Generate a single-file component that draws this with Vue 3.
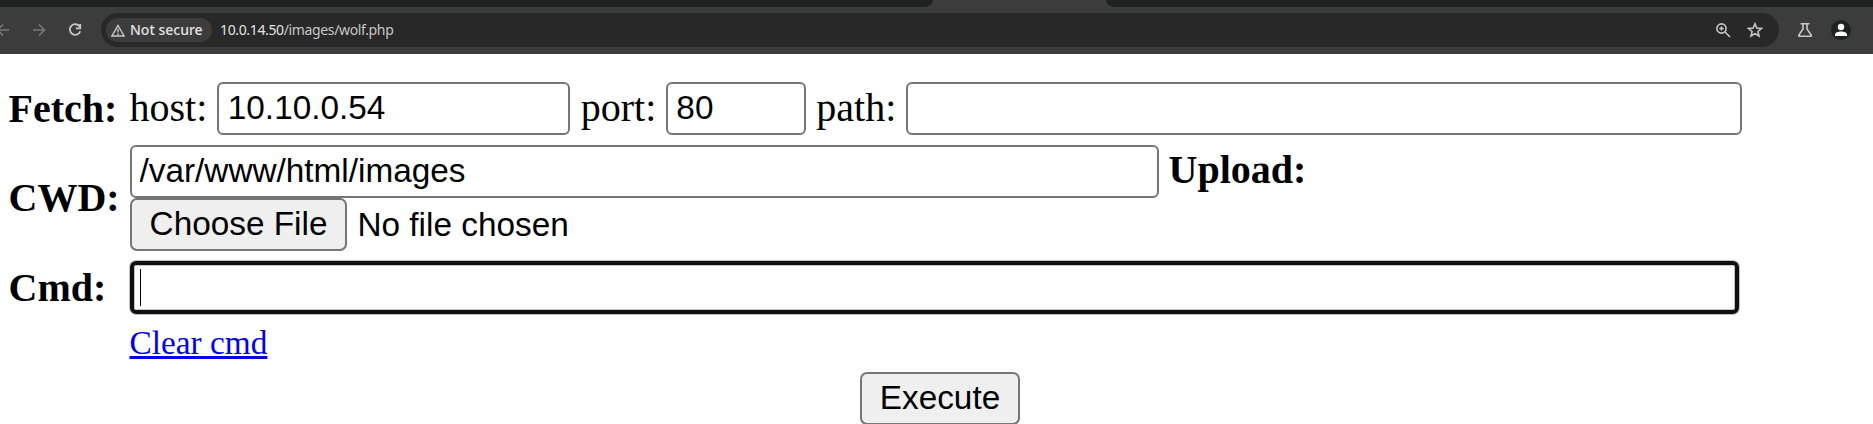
<script setup>
import { ref } from 'vue'

const host = ref('10.10.0.54')
const port = ref('80')
const path = ref('')
const cwd = ref('/var/www/html/images')
</script>

<template>
  <div class="window">
    <header class="browser">
      <div class="tabs"><i class="strip left"></i><i class="strip right"></i></div>
      <nav class="toolbar">
        <svg class="back" width="12" height="16" viewBox="0 0 12 16"><path d="M-2 8H9M3 2.500L-2.500 8L3 13.500" /></svg>
        <svg class="forward" width="16" height="16" viewBox="0 0 16 16"><path d="M2 8H13M8 2.500L13.500 8L8 13.500" /></svg>
        <svg class="reload" width="16" height="16" viewBox="0 0 16 16"><path d="M12.600 4.600A5.300 5.300 0 1 0 13.200 9.200M13.200 2V6.300H8.900" /></svg>
        <div class="omnibox">
          <div class="chip">
            <svg width="14" height="13" viewBox="0 0 14 13"><path d="M7 1.500L13 12H1Z" /><path d="M7 4.800V8.500M7 9.600V11" /></svg>
            <span>Not secure</span>
          </div>
          <div class="url">10.0.14.50<span>/images/wolf.php</span></div>
          <svg class="magnify" width="16" height="16" viewBox="0 0 16 16"><circle cx="6.500" cy="6.500" r="4.600" /><path d="M10 10L15 15" /><path d="M6.500 4.400V8.600M4.400 6.500H8.600" /></svg>
          <svg class="star" width="16" height="16" viewBox="0 0 16 16"><path d="M8 1.800L9.800 6.100L14.400 6.500L10.900 9.500L12 14L8 11.600L4 14L5.100 9.500L1.600 6.500L6.200 6.100Z" /></svg>
        </div>
        <svg class="flask" width="16" height="16" viewBox="0 0 16 16"><path d="M3.500 1.700H12.500M6 2V7L1.700 13.300Q1.500 14.200 2.500 14.300H13.500Q14.500 14.200 14.300 13.300L10 7V2" /></svg>
        <div class="avatar"><svg width="20" height="20" viewBox="0 0 20 20"><circle cx="10" cy="7" r="3.200" /><path d="M4 16V14.500C4 10.500 16 10.500 16 14.500V16Z" /></svg></div>
      </nav>
    </header>

    <form class="page" @submit.prevent>
      <div class="row fetch">
        <b class="label">Fetch:</b>
        <label>host:</label><input v-model="host" class="field host" />
        <label>port:</label><input v-model="port" class="field port" />
        <label>path:</label><input v-model="path" class="field path" />
      </div>
      <div class="row cwd">
        <b class="label">CWD:</b>
        <div class="stack">
          <div class="line"><input v-model="cwd" class="field dir" /><b class="upload">Upload:</b></div>
          <div class="line"><button type="button" class="button choose">Choose File</button><span class="none">No file chosen</span></div>
        </div>
      </div>
      <div class="row cmd">
        <b class="label">Cmd:</b>
        <div class="command"><i class="caret"></i></div>
      </div>
      <div class="row clear"><a href="#">Clear cmd</a></div>
      <button type="submit" class="button execute">Execute</button>
    </form>
  </div>
</template>

<style>
body { margin: 0; background: #fff; overflow: hidden; }
</style>

<style scoped>
* { box-sizing: border-box; }
.window { width: 1873px; height: 424px; overflow: hidden; background: #fff; color: #000; }
.browser { height: 54px; background: #3c3c3c; }
.tabs { height: 7px; display: flex; justify-content: space-between; }
.strip { height: 7px; background: #1f2120; }
.left { width: 933px; border-bottom-right-radius: 9px 7px; }
.right { width: 767px; border-bottom-left-radius: 9px 7px; }
.toolbar { height: 47px; display: flex; align-items: center; padding-bottom: 1px; }
svg { display: block; flex: none; fill: none; stroke: #c7c7c7; stroke-width: 1.6; }
.back, .forward { stroke: #777; }
.forward { margin-left: 19px; }
.reload { margin-left: 20px; stroke-width: 1.8; }
.omnibox { width: 1678px; height: 34px; margin-left: 18px; padding-left: 5px; border-radius: 17px; background: #282828; display: flex; align-items: center; font-family: "Noto Sans", sans-serif; color: #e3e3e3; }
.chip { width: 106px; height: 24px; border-radius: 12px; background: #3c3c3c; display: flex; align-items: center; padding-left: 5px; }
.chip svg { stroke-width: 1.4; }
.chip span { margin-left: 5px; font-size: 14px; font-weight: 500; line-height: 24px; white-space: nowrap; }
.url { width: 190px; margin-left: 8px; font-size: 14px; letter-spacing: -0.36px; line-height: 24px; white-space: nowrap; }
.url span { color: #c7c7c7; }
.magnify { margin-left: auto; }
.star { margin: 0 16px; }
.flask { margin-left: 18px; }
.avatar { width: 20px; height: 20px; margin-left: 18px; border-radius: 50%; background: #1f2120; }
.avatar svg { fill: #fff; stroke: none; }
.page { margin: 0; padding: 28px 0 0 8.500px; font-family: "Liberation Serif", serif; font-size: 40px; line-height: 46px; }
.row { display: flex; align-items: center; white-space: nowrap; }
.label { width: 121px; flex: none; padding-top: 1px; }
.fetch { height: 53px; }
.fetch label { padding-bottom: 1px; }
.field { height: 53px; margin: 0; border: 2px solid #767676; border-radius: 6px; background: #fff; padding: 2px 8px 3px; outline: 0; color: #000; font: 33.333px "Liberation Sans", sans-serif; }
.host { width: 353px; margin: 0 11px 0 9.500px; padding-left: 9px; }
.port { width: 140px; margin: 0 10px; }
.path { width: 836px; margin-left: 9.500px; }
.cwd { margin-top: 10px; height: 106px; }
.cwd .label { padding-top: 0; }
.line { height: 53px; display: flex; align-items: center; }
.dir { width: 1029px; padding-left: 8px; }
.upload { margin-left: 10px; padding-bottom: 3px; }
.button { display: block; height: 53px; margin: 0; padding: 0 0 2px; border: 2px solid #767676; border-radius: 7px; background: #efefef; color: #000; font: 33.333px "Liberation Sans", sans-serif; }
.choose { width: 217px; padding-left: 1px; }
.none { margin-left: 11px; font: 33.333px "Liberation Sans", sans-serif; }
.cmd { height: 53px; margin-top: 10px; }
.cmd .label { padding-top: 1px; }
.command { width: 1609px; height: 53px; margin-left: 0.500px; border: 4px solid #101010; border-radius: 6px; padding: 4px 0 0 6px; box-shadow: 0 0 0 1px #10101044, inset 0 0 0 1px #c4c4c4; }
.caret { display: block; width: 1px; height: 37px; background: #000; }
.clear { height: 40px; margin-top: 9px; padding-left: 121px; font-size: 33.333px; line-height: 40px; }
.clear a { color: #00e; text-decoration: underline; }
.execute { width: 160px; margin: 9px 0 0 851.500px; }
</style>
